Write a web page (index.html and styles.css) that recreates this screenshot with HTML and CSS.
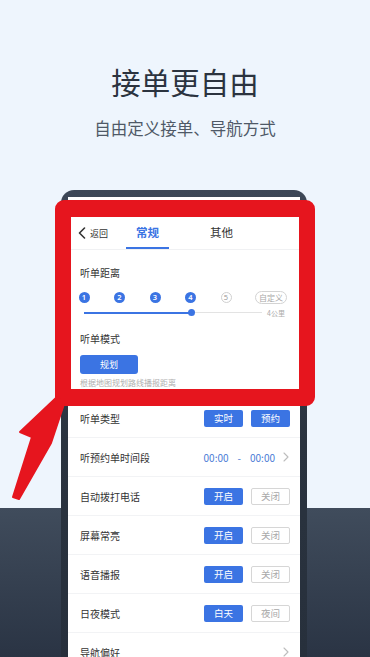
FILE: index.html
```html
<!DOCTYPE html>
<html lang="zh-CN">
<head>
<meta charset="utf-8">
<title>接单更自由</title>
<link rel="stylesheet" href="styles.css">
</head>
<body>
<div class="page">
  <header class="hero">
    <h1 class="title">接单更自由</h1>
    <p class="subtitle">自由定义接单、导航方式</p>
  </header>

  <div class="phone">
    <div class="screen">
      <div class="statusbar"></div>
      <nav class="navbar">
        <div class="back">
          <svg class="back-icon" width="8" height="12" viewBox="0 0 8 12"><path d="M6.5 1 L1.5 6 L6.5 11" fill="none" stroke="#333" stroke-width="1.6" stroke-linecap="round" stroke-linejoin="round"/></svg>
          <span>返回</span>
        </div>
        <div class="tab active">常规</div>
        <div class="tab">其他</div>
      </nav>

      <section class="setting">
        <div class="label">听单距离</div>
        <div class="steps">
          <span class="step">1</span>
          <span class="step">2</span>
          <span class="step">3</span>
          <span class="step">4</span>
          <span class="step off">5</span>
          <span class="custom">自定义</span>
        </div>
        <div class="slider">
          <div class="track">
            <div class="fill" style="width:107px"></div>
            <span class="thumb" style="left:107px"></span>
          </div>
          <span class="unit">4公里</span>
        </div>
        <div class="label mode">听单模式</div>
        <div class="btn primary wide">规划</div>
        <p class="hint">根据地图规划路线播报距离</p>
      </section>

      <ul class="rows">
        <li class="row">
          <span class="row-label">听单类型</span>
          <div class="btns"><span class="btn primary">实时</span><span class="btn primary">预约</span></div>
        </li>
        <li class="row">
          <span class="row-label">听预约单时间段</span>
          <div class="time"><span>00:00</span><span class="dash">-</span><span>00:00</span>
            <svg class="chev" width="6" height="10" viewBox="0 0 6 10"><path d="M1 1 L5 5 L1 9" fill="none" stroke="#bdbdbd" stroke-width="1.1" stroke-linecap="round" stroke-linejoin="round"/></svg>
          </div>
        </li>
        <li class="row">
          <span class="row-label">自动拨打电话</span>
          <div class="btns"><span class="btn primary">开启</span><span class="btn outline">关闭</span></div>
        </li>
        <li class="row">
          <span class="row-label">屏幕常亮</span>
          <div class="btns"><span class="btn primary">开启</span><span class="btn outline">关闭</span></div>
        </li>
        <li class="row">
          <span class="row-label">语音播报</span>
          <div class="btns"><span class="btn primary">开启</span><span class="btn outline">关闭</span></div>
        </li>
        <li class="row">
          <span class="row-label">日夜模式</span>
          <div class="btns"><span class="btn primary">白天</span><span class="btn outline">夜间</span></div>
        </li>
        <li class="row">
          <span class="row-label">导航偏好</span>
          <svg class="chev" width="6" height="10" viewBox="0 0 6 10"><path d="M1 1 L5 5 L1 9" fill="none" stroke="#bdbdbd" stroke-width="1.1" stroke-linecap="round" stroke-linejoin="round"/></svg>
        </li>
      </ul>
    </div>
  </div>

  <div class="highlight"></div>
  <svg class="arrow" width="370" height="657" viewBox="0 0 370 657">
    <polygon points="57,397 64,404 51,443 19,499 13,497 32,437 20,432" fill="#e6151e" stroke="#e6151e" stroke-width="2" stroke-linejoin="round"/>
  </svg>
</div>
</body>
</html>
```

FILE: styles.css
```css
* {
  box-sizing: border-box;
  margin: 0;
  padding: 0;
}

body {
  margin: 0;
  font-family: "Noto Sans CJK SC", "Noto Sans", sans-serif;
}

.page {
  position: relative;
  width: 370px;
  height: 657px;
  overflow: hidden;
  background: linear-gradient(to bottom, #eef5fd 0, #eef5fd 508px, #404c5c 508px, #2a3444 657px);
}

.hero {
  padding-top: 64px;
  text-align: center;
}

.title {
  font-size: 29.5px;
  line-height: 35px;
  font-weight: 400;
  color: #2b333f;
}

.subtitle {
  margin-top: 19px;
  font-size: 16.5px;
  line-height: 20px;
  color: #4f5967;
}

.phone {
  margin: 52px 0 0 61px;
  width: 246px;
  padding: 7px 7px 0;
  border-radius: 13px 13px 0 0;
  background: linear-gradient(to bottom, #3d4757 0, #2a333f 250px, #27303c 470px);
}

.screen {
  background: #fff;
  height: 470px;
}

.statusbar {
  height: 20px;
}

.navbar {
  display: flex;
  align-items: flex-end;
  height: 33px;
  padding-left: 10px;
  border-bottom: 1px solid #f0f1f3;
}

.back {
  display: flex;
  align-items: center;
  gap: 4px;
  height: 32px;
  font-size: 9px;
  color: #333;
}

.back-icon {
  display: block;
}

.tab {
  width: 43px;
  height: 32px;
  line-height: 30px;
  text-align: center;
  font-size: 11.5px;
  color: #333;
  border-bottom: 2px solid transparent;
}

.tab.active {
  margin-left: 18px;
  color: #3b74e3;
  font-weight: 700;
  border-bottom-color: #3b74e3;
}

.tab + .tab {
  margin-left: 31px;
}

.setting {
  padding: 16px 12px 9.5px;
}

.label {
  font-size: 10px;
  line-height: 14px;
  color: #333;
}

.label.mode {
  margin-top: 15px;
}

.steps {
  display: flex;
  align-items: center;
  gap: 24.5px;
  height: 13px;
  margin-top: 10.5px;
  margin-left: -1.5px;
}

.step {
  width: 11px;
  height: 11px;
  border-radius: 50%;
  background: #3b74e3;
  color: #fff;
  font-family: "Noto Sans", sans-serif;
  font-size: 7.5px;
  font-weight: 600;
  line-height: 11px;
  text-align: center;
}

.step.off {
  background: #fff;
  border: 1px solid #d0d0d0;
  color: #9a9a9a;
  font-weight: 400;
  line-height: 9px;
}

.custom {
  margin-left: -1px;
  height: 13px;
  padding: 0 3px;
  border: 1px solid #d3d3d3;
  border-radius: 7px;
  font-size: 8px;
  line-height: 11px;
  color: #a8a8a8;
}

.slider {
  display: flex;
  align-items: center;
  height: 8px;
  margin-top: 5px;
  margin-left: 4px;
}

.track {
  position: relative;
  width: 178px;
  height: 1px;
  background: #e3e3e3;
}

.fill {
  position: absolute;
  left: 0;
  top: -0.5px;
  height: 2px;
  background: #3b74e3;
}

.thumb {
  position: absolute;
  top: -3px;
  width: 7px;
  height: 7px;
  margin-left: -3.5px;
  border-radius: 50%;
  background: #3b74e3;
}

.unit {
  margin-left: 5px;
  font-size: 7px;
  color: #ababab;
}

.btn {
  display: block;
  width: 39px;
  height: 17px;
  border-radius: 2px;
  font-size: 9.5px;
  line-height: 17px;
  text-align: center;
}

.btn.primary {
  background: #3b74e3;
  color: #fff;
}

.btn.outline {
  border: 1px solid #d6d6d6;
  color: #a8a8a8;
  line-height: 15px;
}

.btn.wide {
  width: 58px;
  height: 19px;
  line-height: 19px;
  margin-top: 9px;
  border-radius: 3px;
  font-size: 9px;
}

.hint {
  margin-top: 3px;
  font-size: 8px;
  line-height: 11px;
  color: #b0b0b0;
}

.rows {
  list-style: none;
  margin-top: 2px;
}

.row {
  display: flex;
  align-items: center;
  height: 39px;
  padding: 0 10px 0 12px;
  border-bottom: 1px solid #f2f3f5;
}

.row-label {
  flex: 1;
  font-size: 10px;
  color: #333;
}

.btns {
  display: flex;
  gap: 8px;
}

.time {
  display: flex;
  align-items: center;
  font-size: 10px;
  color: #4a7bd6;
}

.dash {
  margin: 0 9px;
}

.chev {
  display: block;
  margin-left: 8px;
  margin-right: 1px;
}

.highlight {
  position: absolute;
  left: 55px;
  top: 200px;
  width: 260px;
  height: 206px;
  border: 16px solid #e6151e;
  border-top-width: 17px;
  border-bottom-width: 17px;
  border-radius: 9px;
}

.arrow {
  position: absolute;
  left: 0;
  top: 0;
  pointer-events: none;
}
```
